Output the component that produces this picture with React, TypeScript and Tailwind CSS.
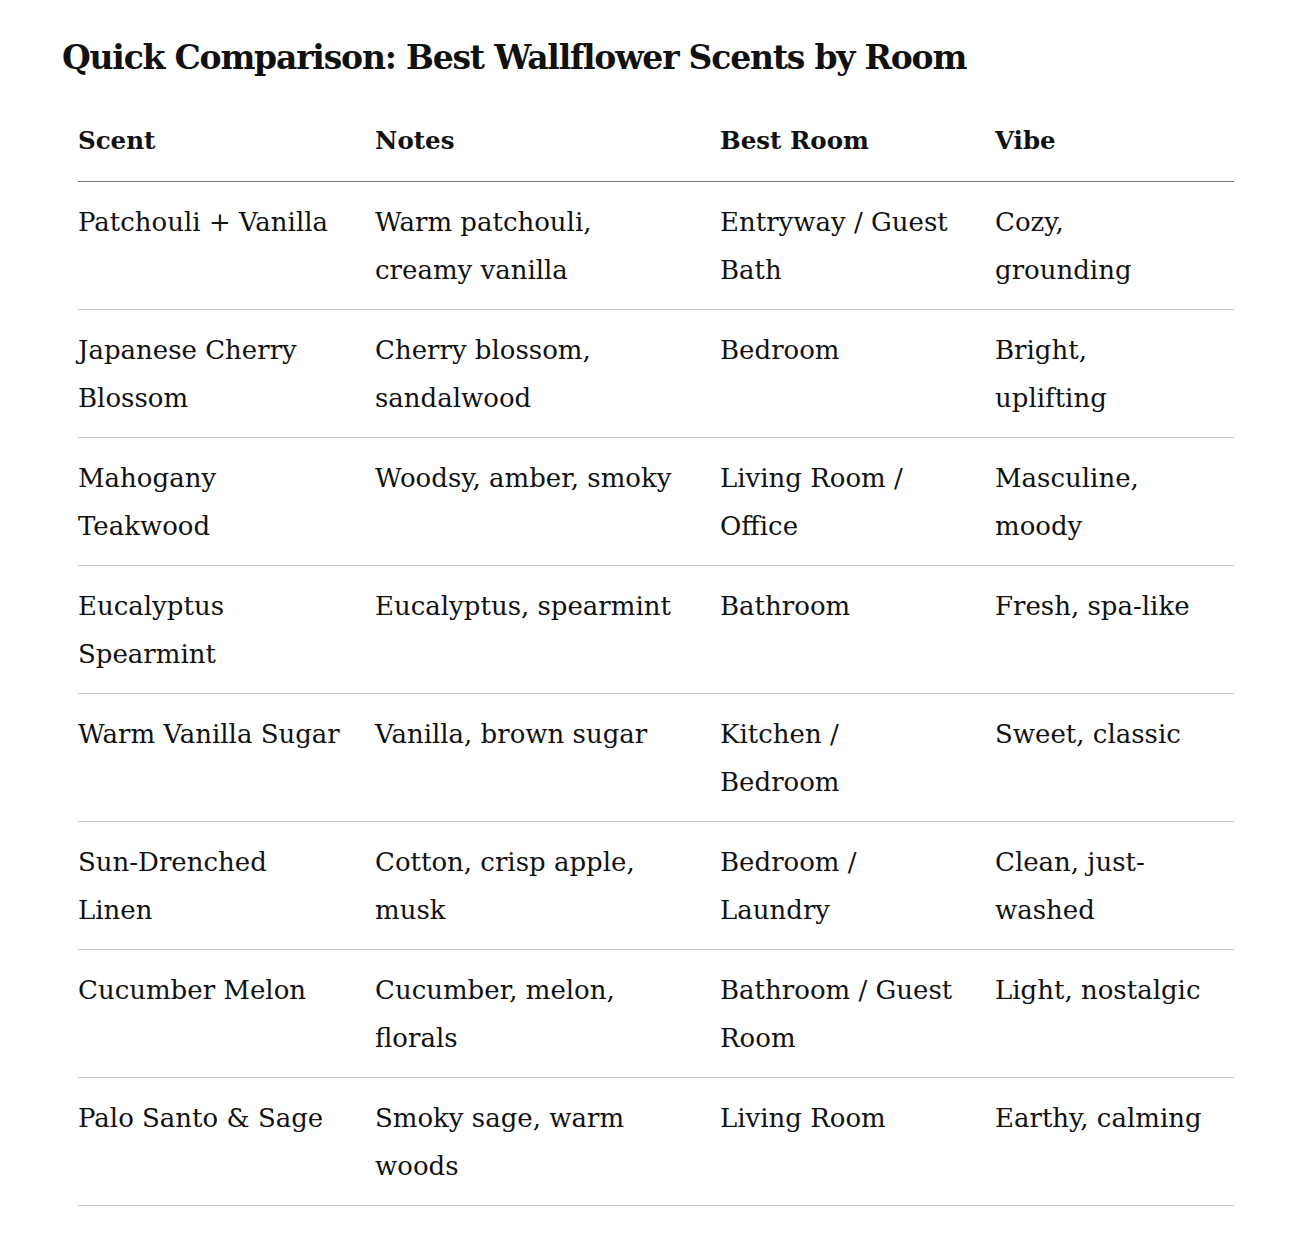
import React from "react";

const rows: string[][][] = [
  [["Patchouli + Vanilla"], ["Warm patchouli,", "creamy vanilla"], ["Entryway / Guest", "Bath"], ["Cozy,", "grounding"]],
  [["Japanese Cherry", "Blossom"], ["Cherry blossom,", "sandalwood"], ["Bedroom"], ["Bright,", "uplifting"]],
  [["Mahogany", "Teakwood"], ["Woodsy, amber, smoky"], ["Living Room /", "Office"], ["Masculine,", "moody"]],
  [["Eucalyptus", "Spearmint"], ["Eucalyptus, spearmint"], ["Bathroom"], ["Fresh, spa-like"]],
  [["Warm Vanilla Sugar"], ["Vanilla, brown sugar"], ["Kitchen /", "Bedroom"], ["Sweet, classic"]],
  [["Sun-Drenched", "Linen"], ["Cotton, crisp apple,", "musk"], ["Bedroom /", "Laundry"], ["Clean, just-", "washed"]],
  [["Cucumber Melon"], ["Cucumber, melon,", "florals"], ["Bathroom / Guest", "Room"], ["Light, nostalgic"]],
  [["Palo Santo & Sage"], ["Smoky sage, warm", "woods"], ["Living Room"], ["Earthy, calming"]],
];

const cols = "grid grid-cols-[297px_345px_275px_239px]";

export default function App() {
  return (
    <div
      className="min-h-[1248px] bg-white text-[#111111] pl-[62px] pt-[34px]"
      style={{ fontFamily: '"DejaVu Serif", "Liberation Serif", serif' }}
    >
      <h1 className="text-[33px] leading-[48px] font-bold tracking-[-1.2px] text-[#111111]">
        Quick Comparison: Best Wallflower Scents by Room
      </h1>
      <div className="ml-4 mt-[19px] w-[1156px]">
        <div className={`${cols} border-b border-[#7a7a7a] pt-4 pb-4`}>
          {["Scent", "Notes", "Best Room", "Vibe"].map((h) => (
            <div key={h} className="text-[24.5px] leading-[48px] font-bold">
              {h}
            </div>
          ))}
        </div>
        {rows.map((r, i) => (
          <div key={i} className={`${cols} border-b border-[#c4c4c4] pt-4 pb-[15px] h-[128px]`}>
            {r.map((cell, j) => (
              <div key={j} className="text-[26px] leading-[48px]">
                {cell.map((line, k) => (
                  <div key={k} className="whitespace-nowrap">
                    {line}
                  </div>
                ))}
              </div>
            ))}
          </div>
        ))}
      </div>
    </div>
  );
}
